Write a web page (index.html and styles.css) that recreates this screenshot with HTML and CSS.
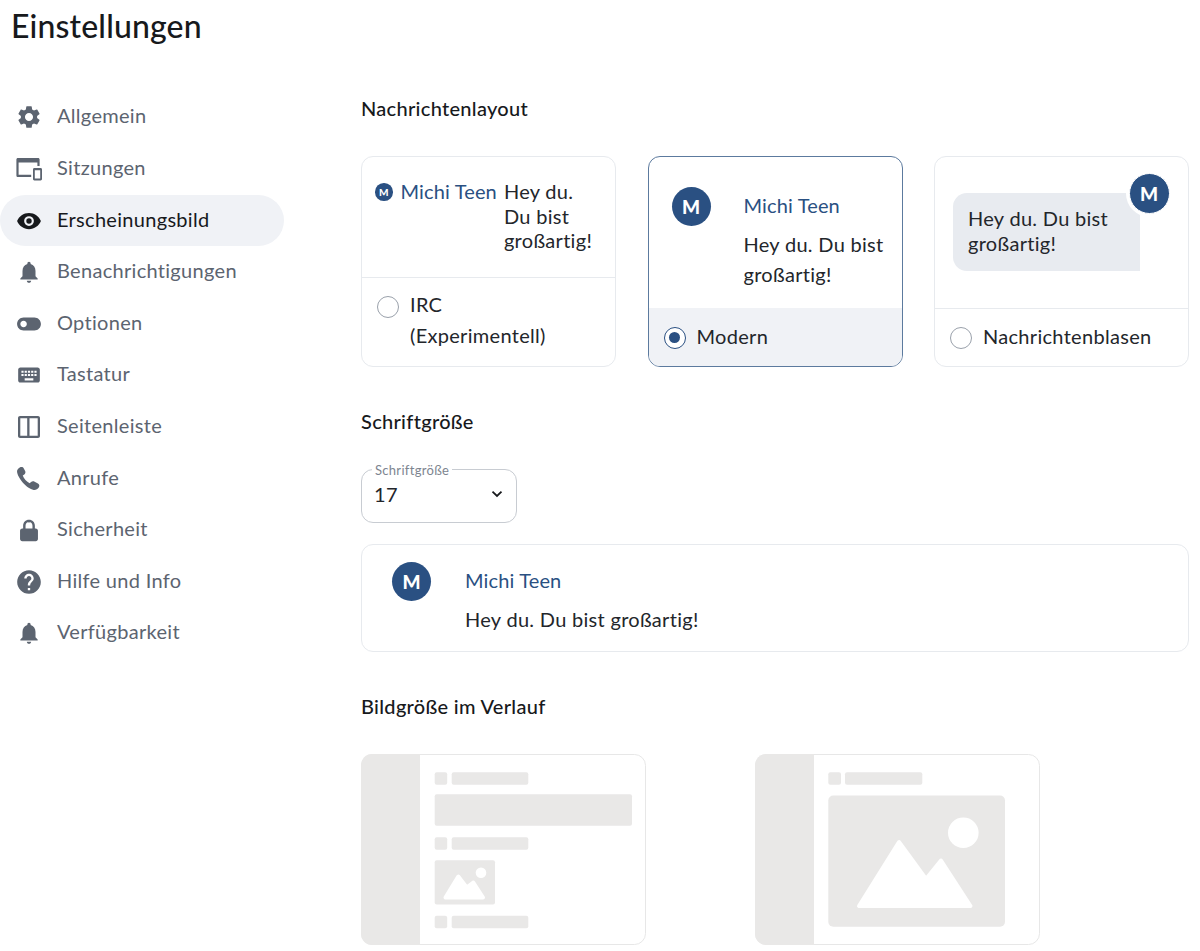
FILE: index.html
```html
<!DOCTYPE html>
<html lang="de">
<head>
<meta charset="utf-8">
<title>Einstellungen</title>
<link rel="stylesheet" href="styles.css">
</head>
<body>
<div class="page">
  <h1 class="title">Einstellungen</h1>
  <div class="layout">
    <nav class="nav">
      <a class="nav-item"><svg class="icon" viewBox=".5 .5 23 23"><path d="M19.14 12.94c.04-.3.06-.61.06-.94 0-.32-.02-.64-.07-.94l2.03-1.58c.18-.14.23-.41.12-.61l-1.92-3.32c-.12-.22-.37-.29-.59-.22l-2.39.96c-.5-.38-1.03-.7-1.62-.94l-.36-2.54c-.04-.24-.24-.41-.48-.41h-3.84c-.24 0-.43.17-.47.41l-.36 2.54c-.59.24-1.13.57-1.62.94l-2.39-.96c-.22-.08-.47 0-.59.22L2.74 8.87c-.12.21-.08.47.12.61l2.03 1.58c-.05.3-.09.63-.09.94s.02.64.07.94l-2.03 1.58c-.18.14-.23.41-.12.61l1.92 3.32c.12.22.37.29.59.22l2.39-.96c.5.38 1.03.7 1.62.94l.36 2.54c.05.24.24.41.48.41h3.84c.24 0 .44-.17.47-.41l.36-2.54c.59-.24 1.13-.56 1.62-.94l2.39.96c.22.08.47 0 .59-.22l1.92-3.32c.12-.22.07-.47-.12-.61l-2.01-1.58zM12 15.6c-1.98 0-3.6-1.62-3.6-3.6s1.62-3.6 3.6-3.6 3.6 1.62 3.6 3.6-1.62 3.6-3.6 3.6z"/></svg><span>Allgemein</span></a>
      <a class="nav-item"><svg class="icon" viewBox="1 1.500 26 26"><path d="M3 3.5h20c1 0 1.600.7 1.600 1.600v6.400h-2.200V8H3.600v12.200h12.600v2.300H3c-1 0-1.600-.7-1.600-1.600V5.100C1.400 4.200 2 3.500 3 3.500z"/><path fill-rule="evenodd" d="M19.400 13.500h6.200c.8 0 1.400.6 1.400 1.400v9.700c0 .8-.6 1.400-1.400 1.400h-6.200c-.8 0-1.400-.6-1.400-1.400v-9.700c0-.8.6-1.400 1.400-1.400zm.4 2.300v8.200h5.400v-8.200z"/></svg><span>Sitzungen</span></a>
      <a class="nav-item is-active"><svg class="icon" viewBox="0 0 24 24"><path d="M12 4.500C7 4.500 2.730 7.610 1 12c1.730 4.390 6 7.500 11 7.500s9.270-3.110 11-7.500c-1.730-4.390-6-7.500-11-7.500zM12 16.500a4.500 4.500 0 1 1 0-9 4.500 4.500 0 0 1 0 9zm0-7a2.500 2.500 0 1 0 0 5 2.500 2.500 0 0 0 0-5z"/></svg><span>Erscheinungsbild</span></a>
      <a class="nav-item"><svg class="icon" viewBox="0 0 24 24"><path d="M12 22c1.100 0 2-.9 2-2h-4c0 1.100.89 2 2 2zm6-6v-5c0-3.070-1.640-5.640-4.500-6.320V4c0-.83-.67-1.500-1.500-1.500s-1.500.67-1.500 1.500v.68C7.630 5.360 6 7.920 6 11v5l-2 2v1h16v-1l-2-2z"/></svg><span>Benachrichtigungen</span></a>
      <a class="nav-item"><svg class="icon" viewBox="0 0 24 24"><path d="M17 6H7c-3.310 0-6 2.690-6 6s2.690 6 6 6h10c3.310 0 6-2.690 6-6s-2.690-6-6-6zM7 15c-1.660 0-3-1.340-3-3s1.340-3 3-3 3 1.340 3 3-1.340 3-3 3z"/></svg><span>Optionen</span></a>
      <a class="nav-item"><svg class="icon" viewBox="0 0 24 24"><path d="M20 5H4c-1.100 0-1.990.9-1.990 2L2 17c0 1.100.9 2 2 2h16c1.100 0 2-.9 2-2V7c0-1.100-.9-2-2-2zm-9 3h2v2h-2V8zm0 3h2v2h-2v-2zM8 8h2v2H8V8zm0 3h2v2H8v-2zm-1 2H5v-2h2v2zm0-3H5V8h2v2zm9 7H8v-2h8v2zm0-4h-2v-2h2v2zm0-3h-2V8h2v2zm3 3h-2v-2h2v2zm0-3h-2V8h2v2z"/></svg><span>Tastatur</span></a>
      <a class="nav-item"><svg class="icon" viewBox="1 1 26 26"><path fill-rule="evenodd" d="M5 3h18c1.100 0 2 .9 2 2v18c0 1.100-.9 2-2 2H5c-1.100 0-2-.9-2-2V5c0-1.100.9-2 2-2zm.3 2.300v17.400h6.900V5.300zm9.200 0v17.400h8.200V5.300z"/></svg><span>Seitenleiste</span></a>
      <a class="nav-item"><svg class="icon" viewBox="1 1 25 25"><path d="M4.600 2.400c1.500-.9 3.200-.5 3.900.9l1.300 2.500c.6 1.200.3 2.500-.8 3.300l-1.500 1.100c.9 2.700 3.800 6.100 6.600 7.500l1.400-1.300c1-.9 2.200-1 3.400-.3l3.200 1.800c1.400.8 1.800 2.400.8 3.700-1.100 1.500-2.900 2.700-4.900 2.400C11.500 23 2.300 12.300 2 6.300c-.1-1.600 1.200-3 2.600-3.900z"/></svg><span>Anrufe</span></a>
      <a class="nav-item"><svg class="icon" viewBox=".5 0 27 27"><path fill-rule="evenodd" d="M14 2.800c3.600 0 6.100 2.700 6.100 6.300V12h.9c1.300 0 2.300 1 2.300 2.300v8.600c0 1.300-1 2.300-2.300 2.300H7c-1.300 0-2.300-1-2.300-2.300v-8.600C4.700 13 5.700 12 7 12h.9V9.100c0-3.600 2.500-6.300 6.100-6.300zm0 2.500c-2.100 0-3.600 1.600-3.600 3.800V12h7.200V9.100c0-2.200-1.500-3.800-3.600-3.800z"/></svg><span>Sicherheit</span></a>
      <a class="nav-item"><svg class="icon" viewBox="1 1 22 22"><path d="M12 2C6.480 2 2 6.480 2 12s4.480 10 10 10 10-4.480 10-10S17.520 2 12 2zm1 17h-2v-2h2v2zm2.070-7.750l-.9.92C13.450 12.900 13 13.500 13 15h-2v-.5c0-1.100.45-2.100 1.170-2.830l1.240-1.260c.37-.36.59-.86.59-1.410 0-1.100-.9-2-2-2s-2 .9-2 2H8c0-2.210 1.790-4 4-4s4 1.790 4 4c0 .88-.36 1.680-.93 2.250z"/></svg><span>Hilfe und Info</span></a>
      <a class="nav-item"><svg class="icon" viewBox="0 0 24 24"><path d="M12 22c1.100 0 2-.9 2-2h-4c0 1.100.89 2 2 2zm6-6v-5c0-3.070-1.640-5.640-4.500-6.320V4c0-.83-.67-1.500-1.500-1.500s-1.500.67-1.500 1.500v.68C7.630 5.360 6 7.920 6 11v5l-2 2v1h16v-1l-2-2z"/></svg><span>Verfügbarkeit</span></a>
    </nav>
    <main class="main">
      <h2 class="heading">Nachrichtenlayout</h2>
      <div class="layouts">
        <label class="card">
          <div class="sample sample-irc">
            <span class="avatar avatar-small">M</span>
            <span class="name">Michi Teen</span>
            <span class="irc-text">Hey du. Du bist großartig!</span>
          </div>
          <div class="choice choice-irc"><span class="radio"></span><span class="choice-label">IRC (Experimentell)</span></div>
        </label>
        <label class="card is-selected">
          <div class="sample sample-modern">
            <span class="avatar">M</span>
            <div class="modern-body">
              <div class="name">Michi Teen</div>
              <div class="modern-text">Hey du. Du bist großartig!</div>
            </div>
          </div>
          <div class="choice"><span class="radio is-on"></span><span class="choice-label">Modern</span></div>
        </label>
        <label class="card">
          <div class="sample sample-bubble">
            <div class="bubble">Hey du. Du bist großartig!<span class="avatar avatar-bubble">M</span></div>
          </div>
          <div class="choice"><span class="radio"></span><span class="choice-label">Nachrichtenblasen</span></div>
        </label>
      </div>

      <h2 class="heading">Schriftgröße</h2>
      <div class="select">
        <span class="select-legend">Schriftgröße</span>
        <span class="select-value">17</span>
        <svg class="chevron" viewBox="0 0 12 8"><path d="M1.500 1.700 6 6l4.500-4.300"/></svg>
      </div>
      <div class="preview">
        <span class="avatar">M</span>
        <div class="preview-body">
          <div class="name">Michi Teen</div>
          <div class="preview-text">Hey du. Du bist großartig!</div>
        </div>
      </div>

      <h2 class="heading">Bildgröße im Verlauf</h2>
      <div class="thumbs">
        <svg class="thumb" viewBox="0 0 285 191">
          <rect class="thumb-frame" x=".5" y=".5" width="284" height="190" rx="11"/>
          <path class="thumb-fill" d="M11 0H59V191H11A11 11 0 0 1 0 180V11A11 11 0 0 1 11 0Z"/>
          <rect class="thumb-fill" x="73.700" y="18.200" width="12.500" height="12.500" rx="2"/>
          <rect class="thumb-fill" x="90.700" y="18.200" width="76.600" height="12.500" rx="2"/>
          <rect class="thumb-fill" x="73.700" y="40.200" width="197.300" height="31.600" rx="2"/>
          <rect class="thumb-fill" x="73.700" y="83.200" width="12.500" height="12.500" rx="2"/>
          <rect class="thumb-fill" x="90.700" y="83.200" width="76.600" height="12.500" rx="2"/>
          <rect class="thumb-fill" x="73.700" y="106.200" width="60.300" height="44.300" rx="2"/>
          <path class="thumb-cut" d="M97.300 122.500 84.500 143.500H122L112.300 128.500 105.700 133.500Z"/>
          <circle class="thumb-hole" cx="120" cy="118.800" r="5.300"/>
          <rect class="thumb-fill" x="73.700" y="161.800" width="12.500" height="12.500" rx="2"/>
          <rect class="thumb-fill" x="90.700" y="161.800" width="76.600" height="12.500" rx="2"/>
        </svg>
        <svg class="thumb" viewBox="0 0 285 191">
          <rect class="thumb-frame" x=".5" y=".5" width="284" height="190" rx="11"/>
          <path class="thumb-fill" d="M11 0H59V191H11A11 11 0 0 1 0 180V11A11 11 0 0 1 11 0Z"/>
          <rect class="thumb-fill" x="73.300" y="18.200" width="12.700" height="12.500" rx="2"/>
          <rect class="thumb-fill" x="90" y="18.200" width="77.300" height="12.500" rx="2"/>
          <rect class="thumb-fill" x="73.300" y="41.500" width="176.700" height="131.300" rx="5"/>
          <path class="thumb-cut" d="M144 88 104 152H215.500L186 106.500 171 125Z"/>
          <circle class="thumb-hole" cx="208.300" cy="78.800" r="15.300"/>
        </svg>
      </div>
    </main>
  </div>
</div>
</body>
</html>
```

FILE: styles.css
```css
* { box-sizing: border-box; }

html, body { margin: 0; height: 100%; background: #fff; }

body {
  font-family: "Lato", "Noto Sans", "Liberation Sans", sans-serif;
  font-size: 20px;
  letter-spacing: .3px;
  color: #23262b;
  overflow: hidden;
}

.page { height: 951px; overflow: hidden; }

.title {
  margin: 0;
  padding-left: 11px;
  height: 91px;
  color: #17191c;
  font-size: 32px;
  line-height: 52px;
  font-weight: 500;
  letter-spacing: .15px;
}

.layout { display: flex; }

.nav { width: 361px; flex: none; margin-top: .6px; padding-right: 77px; }

.nav-item {
  display: flex;
  align-items: center;
  gap: 15px;
  height: 51.600px;
  padding-left: 16px;
  border-radius: 26px;
  color: #5c6470;
  font-size: 20px;
}
.nav-item span { margin-bottom: 4px; }

.nav-item.is-active { background: #f0f2f6; color: #17191c; }

.icon { width: 26px; height: 26px; flex: none; fill: #5c6470; }
.is-active .icon { fill: #17191c; }

.main { flex: 1; min-width: 0; padding: 4px 11px 0 0; }

.heading {
  margin: 41px 0 35px;
  color: #17191c;
  font-size: 20px;
  line-height: 26px;
  font-weight: 500;
  letter-spacing: .3px;
}
.heading:first-child { margin-top: 0; }

.layouts { display: flex; gap: 31.500px; }

.card {
  flex: 1 1 0;
  height: 211px;
  display: flex;
  flex-direction: column;
  border: 1px solid #e7eaee;
  border-radius: 12px;
  overflow: hidden;
}
.card.is-selected { border-color: #5c7a9e; }

.sample { flex: 1; min-height: 0; }

.avatar {
  display: flex;
  align-items: center;
  justify-content: center;
  width: 39px;
  height: 39px;
  flex: none;
  border-radius: 50%;
  background: #2a5082;
  color: #fff;
  font-size: 19px;
  font-weight: 900;
  letter-spacing: 0;
}

.name { color: #2a5082; letter-spacing: .15px; }

.sample-irc {
  display: flex;
  align-items: flex-start;
  padding: 22px 22px 0 13px;
  line-height: 24.500px;
}
.avatar-small { width: 17.500px; height: 17.500px; font-size: 10px; margin: 4px 8px 0 0; }
.sample-irc .name { white-space: nowrap; margin-right: 7px; }
.irc-text { flex: 1; }

.sample-modern { display: flex; padding: 30px 8px 0 23px; }
.modern-body { margin-left: 33px; }
.modern-body .name { line-height: 37px; }
.modern-text { line-height: 30px; margin-top: 5px; }

.sample-bubble { padding: 36px 0 0 18px; }
.bubble {
  position: relative;
  width: 187px;
  height: 78px;
  padding: 13px 15px;
  background: #e8ebf0;
  border-radius: 14px 0 0 14px;
  line-height: 25px;
}
.avatar-bubble {
  position: absolute;
  top: -20px;
  right: -29.500px;
  width: 41px;
  height: 41px;
  border: 1px solid #fff;
  box-shadow: 0 0 0 3px #fff;
}

.choice {
  display: flex;
  align-items: center;
  gap: 11px;
  height: 58px;
  padding-left: 15px;
  border-top: 1px solid #e7eaee;
}
.choice-label { margin-bottom: 4px; }
.is-selected .choice { background: #f0f2f6; border-top-color: #f0f2f6; }

.choice-irc { height: 89px; align-items: flex-start; padding-top: 11px; }
.choice-irc .radio { margin-top: 7px; }
.choice-irc .choice-label { width: 150px; line-height: 31px; margin: 0; }

.radio {
  display: flex;
  align-items: center;
  justify-content: center;
  width: 22px;
  height: 22px;
  flex: none;
  border: 1px solid #9aa1ab;
  border-radius: 50%;
  background: #fff;
}
.radio.is-on { border-color: #2a5082; }
.radio.is-on::after {
  content: "";
  width: 11px;
  height: 11px;
  border-radius: 50%;
  background: #2a5082;
}

.select {
  position: relative;
  display: flex;
  align-items: center;
  justify-content: space-between;
  width: 156px;
  height: 54px;
  padding: 0 13px 5px 12px;
  border: 1px solid #c8ccd2;
  border-radius: 12px;
}
.select-legend {
  position: absolute;
  top: -7px;
  left: 10px;
  padding: 0 3px;
  background: #fff;
  color: #7d8590;
  font-size: 13px;
  line-height: 14px;
}
.select-value { font-size: 20px; }
.chevron { width: 12px; height: 8px; fill: none; stroke: #17191c; stroke-width: 1.800; }

.preview {
  display: flex;
  height: 108px;
  margin-top: 21px;
  padding: 17px 0 0 30px;
  border: 1px solid #e7eaee;
  border-radius: 12px;
}
.preview-body { margin-left: 34px; }
.preview-body .name { line-height: 37px; }
.preview-text { line-height: 28px; margin-top: 6px; }

.thumbs { display: flex; gap: 109px; margin-top: 1px; }
.thumb { width: 285px; height: 191px; flex: none; }
.thumb-frame { fill: #fff; stroke: #e7e7e7; }
.thumb-fill { fill: #e9e8e7; }
.thumb-cut { fill: #fff; stroke: #fff; stroke-width: 4; stroke-linejoin: round; }
.thumb-hole { fill: #fff; }
```
